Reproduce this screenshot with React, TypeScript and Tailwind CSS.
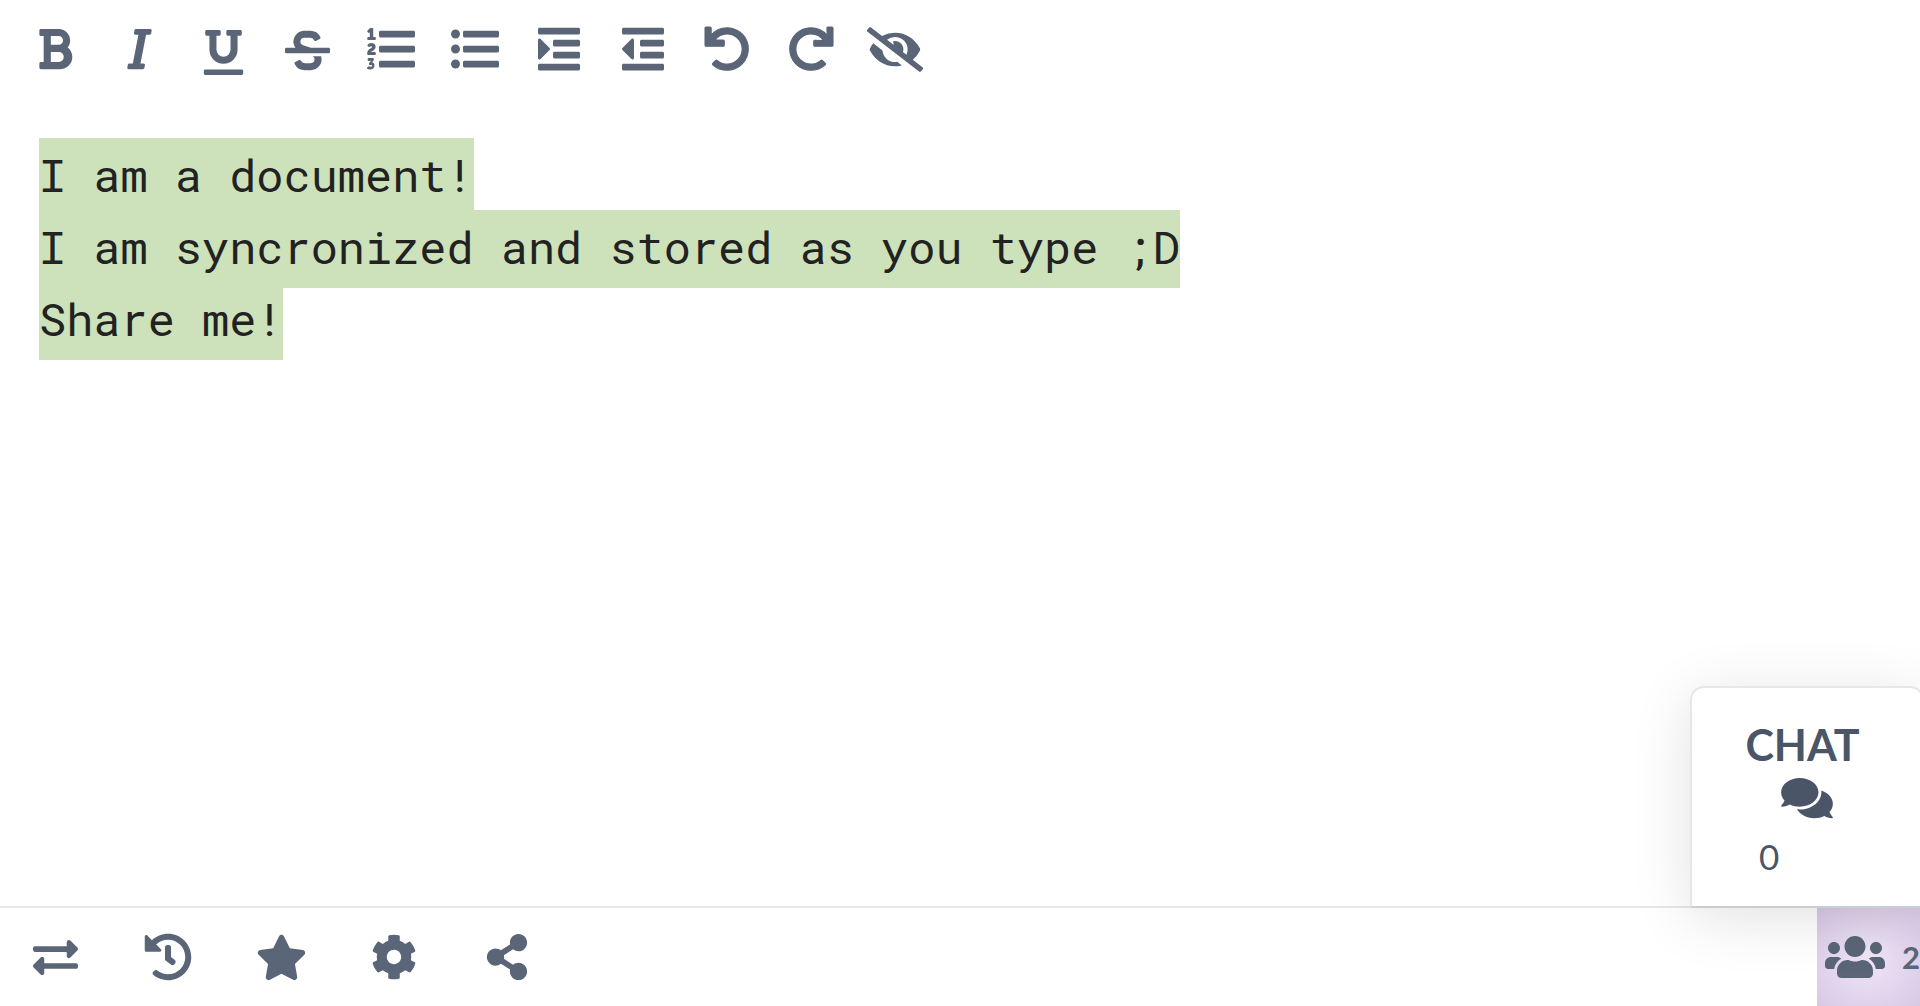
import {
  FaBold,
  FaUnderline,
  FaStrikethrough,
  FaEyeSlash,
  FaExchangeAlt,
  FaHistory,
  FaStar,
  FaCog,
  FaShareAlt,
  FaComments,
  FaUsers,
} from "react-icons/fa";

// older font awesome glyphs, the current ones have thinner bars
function Glyph({ w, d, className }: { w: number; d: string; className: string }) {
  return (
    <svg viewBox={`0 0 ${w} 512`} fill="currentColor" className={className}>
      <path d={d} />
    </svg>
  );
}

const italicPath =
  "M204.758 416h-33.849l62.092-320h40.725a16 16 0 0 0 15.704-12.937l6.242-32C297.599 41.184 290.034 32 279.968 32H120.235a16 16 0 0 0-15.704 12.937l-6.242 32C96.362 86.816 103.927 96 113.993 96h33.846l-62.09 320H46.278a16 16 0 0 0-15.704 12.935l-6.245 32C22.402 470.815 29.967 480 40.034 480h158.479a16 16 0 0 0 15.704-12.935l6.245-32c1.927-9.880-5.638-19.065-15.704-19.065z";
const listOlPath =
  "M3.263 139.527c0-7.477 3.917-11.572 11.573-11.572h15.131V88.078c0-5.163.534-10.503.534-10.503h-.356s-1.779 2.67-2.848 3.738c-4.451 4.273-10.504 4.451-15.666-1.068l-5.518-6.231c-5.342-5.341-4.984-11.216.534-16.379l21.72-19.938C32.815 33.602 36.732 32 42.785 32H54.89c7.656 0 11.749 3.916 11.749 11.572v84.384h15.488c7.655 0 11.572 4.094 11.572 11.572v8.901c0 7.477-3.917 11.572-11.572 11.572H14.836c-7.656 0-11.573-4.095-11.573-11.572v-8.902zM2.211 304.591c0-47.278 50.955-56.383 50.955-69.165 0-7.18-5.954-8.755-9.28-8.755-3.153 0-6.479 1.051-9.455 3.852-5.079 4.903-10.507 7.004-16.111 2.451l-8.579-6.829c-5.779-4.553-7.18-9.805-2.803-15.409C13.592 201.981 26.025 192 47.387 192c19.437 0 44.476 10.506 44.476 39.573 0 38.347-46.753 46.402-48.679 56.909h39.049c7.529 0 11.557 4.027 11.557 11.382v8.755c0 7.354-4.028 11.382-11.557 11.382h-67.94c-7.005 0-12.083-4.028-12.083-11.382v-4.028zM5.654 454.61l5.603-9.28c3.853-6.654 9.105-7.004 15.584-3.152 4.903 2.101 9.63 3.152 14.359 3.152 10.155 0 14.358-3.502 14.358-8.23 0-6.654-5.604-9.106-15.934-9.106h-4.728c-5.954 0-9.28-2.101-12.258-7.88l-1.05-1.926c-2.451-4.728-1.226-9.806 2.801-14.884l5.604-7.004c6.829-8.405 12.257-13.483 12.257-13.483v-.35s-4.203 1.051-12.608 1.051H16.685c-6.303 0-9.455-3.853-9.455-11.382v-8.755c0-7.529 3.152-11.382 9.455-11.382h44.476c7.529 0 11.557 4.028 11.557 11.382v3.152c0 5.954-1.401 10.156-4.203 13.833l-14.708 17.858c15.759 3.853 26.265 15.059 26.265 33.618 0 23.993-16.985 43.428-49.505 43.428-13.483 0-23.638-4.553-30.093-8.405-6.129-3.852-7.179-9.105-3.502-15.583zM144 132h352c8.837 0 16-7.163 16-16V76c0-8.837-7.163-16-16-16H144c-8.837 0-16 7.163-16 16v40c0 8.837 7.163 16 16 16zm0 160h352c8.837 0 16-7.163 16-16v-40c0-8.837-7.163-16-16-16H144c-8.837 0-16 7.163-16 16v40c0 8.837 7.163 16 16 16zm0 160h352c8.837 0 16-7.163 16-16v-40c0-8.837-7.163-16-16-16H144c-8.837 0-16 7.163-16 16v40c0 8.837 7.163 16 16 16z";
const listUlPath =
  "M96 96c0 26.51-21.49 48-48 48S0 122.51 0 96s21.49-48 48-48 48 21.49 48 48zM48 208c-26.51 0-48 21.49-48 48s21.49 48 48 48 48-21.49 48-48-21.49-48-48-48zm0 160c-26.51 0-48 21.49-48 48s21.49 48 48 48 48-21.49 48-48-21.49-48-48-48zm96-236h352c8.837 0 16-7.163 16-16V76c0-8.837-7.163-16-16-16H144c-8.837 0-16 7.163-16 16v40c0 8.837 7.163 16 16 16zm0 160h352c8.837 0 16-7.163 16-16v-40c0-8.837-7.163-16-16-16H144c-8.837 0-16 7.163-16 16v40c0 8.837 7.163 16 16 16zm0 160h352c8.837 0 16-7.163 16-16v-40c0-8.837-7.163-16-16-16H144c-8.837 0-16 7.163-16 16v40c0 8.837 7.163 16 16 16z";
const indentPath =
  "M0 84V44c0-8.837 7.163-16 16-16h416c8.837 0 16 7.163 16 16v40c0 8.837-7.163 16-16 16H16C7.163 100 0 92.837 0 84zm176 144h256c8.837 0 16-7.163 16-16v-40c0-8.837-7.163-16-16-16H176c-8.837 0-16 7.163-16 16v40c0 8.837 7.163 16 16 16zM16 484h416c8.837 0 16-7.163 16-16v-40c0-8.837-7.163-16-16-16H16c-8.837 0-16 7.163-16 16v40c0 8.837 7.163 16 16 16zm160-128h256c8.837 0 16-7.163 16-16v-40c0-8.837-7.163-16-16-16H176c-8.837 0-16 7.163-16 16v40c0 8.837 7.163 16 16 16zm-52.687-111.313l-96-95.984C17.266 138.652 0 145.776 0 160.016v191.975c0 14.329 17.325 21.304 27.313 11.313l96-95.992c6.249-6.247 6.249-16.377 0-22.625z";
const outdentPath =
  "M0 84V44c0-8.837 7.163-16 16-16h416c8.837 0 16 7.163 16 16v40c0 8.837-7.163 16-16 16H16c-8.837 0-16-7.163-16-16zm208 144h224c8.837 0 16-7.163 16-16v-40c0-8.837-7.163-16-16-16H208c-8.837 0-16 7.163-16 16v40c0 8.837 7.163 16 16 16zM16 484h416c8.837 0 16-7.163 16-16v-40c0-8.837-7.163-16-16-16H16c-8.837 0-16 7.163-16 16v40c0 8.837 7.163 16 16 16zm192-128h224c8.837 0 16-7.163 16-16v-40c0-8.837-7.163-16-16-16H208c-8.837 0-16 7.163-16 16v40c0 8.837 7.163 16 16 16zM4.687 267.313l96 95.984C110.734 373.348 128 366.224 128 351.984V160.016c0-14.329-17.325-21.304-27.313-11.313l-96 95.992c-6.249 6.247-6.249 16.377 0 22.618z";
const undoPath =
  "M212.333 224.333H12c-6.627 0-12-5.373-12-12V12C0 5.373 5.373 0 12 0h48c6.627 0 12 5.373 12 12v78.112C117.773 39.279 184.26 7.47 258.175 8.007c136.906.994 246.448 111.623 246.157 248.532C504.041 393.258 393.12 504 256.333 504c-64.089 0-122.496-24.313-166.51-64.215-5.099-4.622-5.334-12.554-.467-17.42l33.967-33.967c4.474-4.474 11.662-4.717 16.401-.525C170.76 415.336 211.58 432 256.333 432c97.268 0 176-78.716 176-176 0-97.267-78.716-176-176-176-58.496 0-110.28 28.476-142.274 72.333h98.274c6.627 0 12 5.373 12 12v48c0 6.627-5.373 12-12 12z";
const redoPath =
  "M500.333 0h-47.411c-6.853 0-12.314 5.729-11.986 12.574l3.966 82.759C399.416 41.899 331.672 8 256.001 8 119.34 8 7.899 119.526 8 256.187 8.101 393.068 119.096 504 256 504c63.926 0 122.202-24.187 166.178-63.908 5.113-4.618 5.354-12.561.482-17.433l-33.971-33.971c-4.466-4.466-11.64-4.717-16.38-.543C341.308 415.448 300.606 432 256 432c-97.267 0-176-78.716-176-176 0-97.267 78.716-176 176-176 60.892 0 114.506 30.858 146.099 77.8l-101.525-4.865c-6.845-.328-12.574 5.133-12.574 11.986v47.411c0 6.627 5.373 12 12 12h200.333c6.627 0 12-5.373 12-12V12c0-6.627-5.373-12-12-12z";

const lines = [
  "I am a document!",
  "I am syncronized and stored as you type ;D",
  "Share me!",
];

export default function App() {
  return (
    <div className="relative flex h-screen w-full flex-col overflow-hidden bg-white font-['Lato',sans-serif]">
      {/* toolbar */}
      <div className="flex h-[98px] shrink-0 items-center gap-[36px] pl-[31px] text-[#5a6577]">
        <button className="flex w-[48px] justify-center">
          <FaBold className="text-[46px]" />
        </button>
        <button className="flex w-[48px] justify-center">
          <Glyph w={320} d={italicPath} className="h-[46px] w-[29px]" />
        </button>
        <button className="mt-[7px] flex w-[48px] justify-center">
          <FaUnderline className="text-[45px]" />
        </button>
        <button className="mt-[3px] flex w-[48px] justify-center">
          <FaStrikethrough className="text-[45px]" />
        </button>
        <button className="flex w-[48px] justify-center">
          <Glyph w={512} d={listOlPath} className="h-[48px] w-[48px]" />
        </button>
        <button className="flex w-[48px] justify-center">
          <Glyph w={512} d={listUlPath} className="h-[48px] w-[48px]" />
        </button>
        <button className="flex w-[48px] justify-center">
          <Glyph w={448} d={indentPath} className="h-[48px] w-[42px]" />
        </button>
        <button className="flex w-[48px] justify-center">
          <Glyph w={448} d={outdentPath} className="h-[48px] w-[42px]" />
        </button>
        <button className="flex w-[48px] justify-center">
          <Glyph
            w={512}
            d={undoPath}
            className="h-[44px] w-[44px] overflow-visible stroke-current stroke-[12]"
          />
        </button>
        <button className="flex w-[48px] justify-center">
          <Glyph
            w={512}
            d={redoPath}
            className="h-[44px] w-[44px] overflow-visible stroke-current stroke-[12]"
          />
        </button>
        <button className="flex w-[48px] justify-center">
          <FaEyeSlash className="h-[45px] w-[56px] shrink-0" />
        </button>
      </div>

      {/* editor */}
      <div className="flex flex-1 flex-col items-start pl-[39px] pt-[40px] font-['Roboto_Mono','Liberation_Mono',monospace] text-[45.28px] text-[#222222]">
        {lines.map((line) => (
          <div
            key={line}
            className="mb-[-6px] h-[78px] whitespace-pre bg-[#cde2bb] leading-[74px]"
          >
            {line}
          </div>
        ))}
      </div>

      {/* footer */}
      <div className="flex h-[100px] shrink-0 items-center justify-between border-t-2 border-[#e6e6ec] text-[#5a6577]">
        <div className="flex items-center gap-[49px] pl-[23px]">
          <button className="flex w-[64px] justify-center">
            <FaExchangeAlt className="text-[45px]" />
          </button>
          <button className="flex w-[64px] justify-center">
            <FaHistory className="text-[48px]" />
          </button>
          <button className="flex w-[64px] justify-center">
            <FaStar className="text-[51px]" />
          </button>
          <button className="flex w-[64px] justify-center">
            <FaCog className="text-[46px]" />
          </button>
          <button className="flex w-[64px] justify-center">
            <FaShareAlt className="text-[46px]" />
          </button>
        </div>
        <div className="flex h-full w-[103px] items-center gap-[17px] overflow-hidden bg-[radial-gradient(circle,#efe6f7,#d8c8e6)] pl-[8px]">
          <FaUsers className="h-[48px] w-[60px] shrink-0" />
          <span className="text-[31px] font-bold">2</span>
        </div>
      </div>

      {/* chat tab */}
      <div className="absolute bottom-[98px] right-[-4px] flex h-[222px] w-[234px] flex-col items-center rounded-t-[14px] border-2 border-[#e6e6ec] border-b-[#c9ced6] bg-white pt-[32px] text-[#4a5568] shadow-[0_10px_60px_rgba(0,0,0,0.12)]">
        <span className="ml-[-9px] text-[43px] font-bold leading-[50px]">CHAT</span>
        <FaComments className="mt-[5px] h-[46px] w-[52px]" />
        <span className="mt-[13px] self-start pl-[67px] text-[35px] leading-[45px]">
          0
        </span>
      </div>
    </div>
  );
}
